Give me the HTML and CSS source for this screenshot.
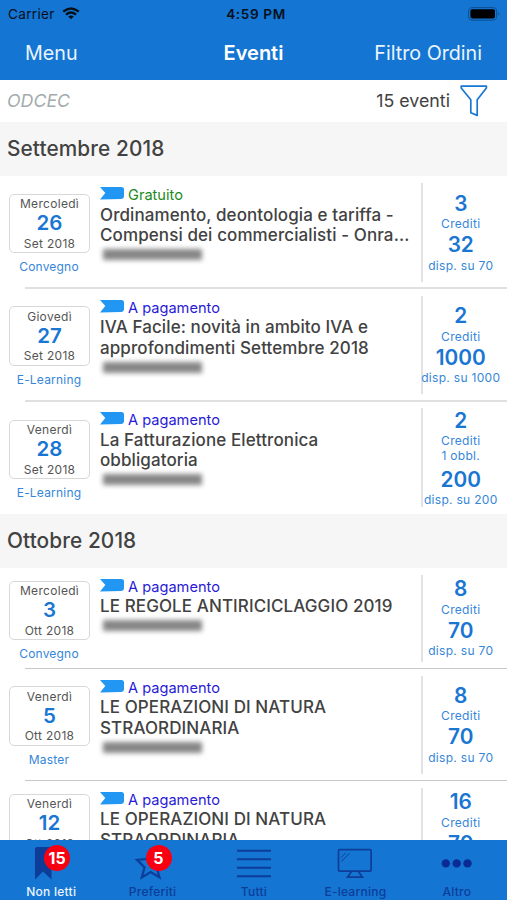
FILE: index.html
```html
<!DOCTYPE html>
<html lang="it">
<head>
    <meta charset="UTF-8">
    <meta name="viewport" content="width=device-width, initial-scale=1.0">
    <title>Eventi</title>
    <link rel="stylesheet" href="styles.css">
</head>
<body>
    <svg class="defs" width="0" height="0">
        <symbol id="flag" viewBox="0 0 24 13">
            <path d="M0 0H21.5Q24 0 24 2.5V9Q24 11.7 21 11.9L0 12.4L5.3 6Z" fill="#2196f3"/>
        </symbol>
    </svg>

    <div class="app">
        <header>
            <div class="status-bar">
                <div class="carrier">
                    <span>Carrier</span>
                    <svg width="18" height="13" viewBox="0 0 18 13" fill="none" stroke="#06101c" stroke-width="2.4">
                        <path d="M1.2 4.7Q9 -1.9 16.8 4.7"/>
                        <path d="M4 7.7Q9 3.5 14 7.7"/>
                        <path d="M9 12.3L6.2 9.6Q9 7.5 11.8 9.6Z" fill="#06101c" stroke="none"/>
                    </svg>
                </div>
                <div class="clock">4:59 PM</div>
                <svg class="battery" width="33" height="14" viewBox="0 0 33 14">
                    <rect x="0.6" y="0.6" width="28" height="12.6" rx="3.4" fill="none" stroke="#0c4f90" stroke-width="1"/>
                    <rect x="2.4" y="2.2" width="24.6" height="9.2" rx="1.8" fill="#000"/>
                    <path d="M30.3 4.8Q32.2 6.9 30.3 9Z" fill="#0c4f90"/>
                </svg>
            </div>
            <nav class="nav-bar">
                <a class="nav-left">Menu</a>
                <h1>Eventi</h1>
                <a class="nav-right">Filtro Ordini</a>
            </nav>
        </header>

        <div class="filter-bar">
            <span class="search">ODCEC</span>
            <span class="count">15 eventi</span>
            <svg width="28" height="32" viewBox="0 0 28 32" fill="none" stroke="#1976d2" stroke-width="1.7" stroke-linejoin="round">
                <path d="M1.2 1.2H26.4V3L17.2 14.8V30.4L10.8 27.8V14.8L1.2 3Z"/>
            </svg>
        </div>

        <main>
            <h2>Settembre 2018</h2>

            <div class="event">
                <div class="when">
                    <div class="date">
                        <span>Mercoledì</span>
                        <b>26</b>
                        <span>Set 2018</span>
                    </div>
                    <div class="type">Convegno</div>
                </div>
                <div class="info">
                    <div class="price free"><svg><use href="#flag"/></svg>Gratuito</div>
                    <div class="title">Ordinamento, deontologia e tariffa -<br>Compensi dei commercialisti - Onra...</div>
                    <div class="hidden-org"></div>
                </div>
                <div class="credits">
                    <b>3</b>
                    <span>Crediti</span>
                    <b class="seats">32</b>
                    <span>disp. su 70</span>
                </div>
            </div>

            <div class="event">
                <div class="when">
                    <div class="date">
                        <span>Giovedì</span>
                        <b>27</b>
                        <span>Set 2018</span>
                    </div>
                    <div class="type">E-Learning</div>
                </div>
                <div class="info">
                    <div class="price"><svg><use href="#flag"/></svg>A pagamento</div>
                    <div class="title">IVA Facile: novità in ambito IVA e<br>approfondimenti Settembre 2018</div>
                    <div class="hidden-org"></div>
                </div>
                <div class="credits">
                    <b>2</b>
                    <span>Crediti</span>
                    <b class="seats">1000</b>
                    <span>disp. su 1000</span>
                </div>
            </div>

            <div class="event last">
                <div class="when">
                    <div class="date">
                        <span>Venerdì</span>
                        <b>28</b>
                        <span>Set 2018</span>
                    </div>
                    <div class="type">E-Learning</div>
                </div>
                <div class="info">
                    <div class="price"><svg><use href="#flag"/></svg>A pagamento</div>
                    <div class="title">La Fatturazione Elettronica<br>obbligatoria</div>
                    <div class="hidden-org"></div>
                </div>
                <div class="credits">
                    <b>2</b>
                    <span>Crediti</span>
                    <span class="required">1 obbl.</span>
                    <b class="seats">200</b>
                    <span>disp. su 200</span>
                </div>
            </div>

            <h2>Ottobre 2018</h2>

            <div class="event short thin">
                <div class="when">
                    <div class="date">
                        <span>Mercoledì</span>
                        <b>3</b>
                        <span>Ott 2018</span>
                    </div>
                    <div class="type">Convegno</div>
                </div>
                <div class="info">
                    <div class="price"><svg><use href="#flag"/></svg>A pagamento</div>
                    <div class="title">LE REGOLE ANTIRICICLAGGIO 2019</div>
                    <div class="hidden-org"></div>
                </div>
                <div class="credits">
                    <b>8</b>
                    <span>Crediti</span>
                    <b class="seats">70</b>
                    <span>disp. su 70</span>
                </div>
            </div>

            <div class="event thin">
                <div class="when">
                    <div class="date">
                        <span>Venerdì</span>
                        <b>5</b>
                        <span>Ott 2018</span>
                    </div>
                    <div class="type">Master</div>
                </div>
                <div class="info">
                    <div class="price"><svg><use href="#flag"/></svg>A pagamento</div>
                    <div class="title">LE OPERAZIONI DI NATURA<br>STRAORDINARIA</div>
                    <div class="hidden-org"></div>
                </div>
                <div class="credits">
                    <b>8</b>
                    <span>Crediti</span>
                    <b class="seats">70</b>
                    <span>disp. su 70</span>
                </div>
            </div>

            <div class="event short thin">
                <div class="when">
                    <div class="date">
                        <span>Venerdì</span>
                        <b>12</b>
                        <span>Ott 2018</span>
                    </div>
                </div>
                <div class="info">
                    <div class="price"><svg><use href="#flag"/></svg>A pagamento</div>
                    <div class="title">LE OPERAZIONI DI NATURA<br>STRAORDINARIA</div>
                </div>
                <div class="credits">
                    <b>16</b>
                    <span>Crediti</span>
                    <b class="seats">70</b>
                </div>
            </div>
        </main>

        <footer class="tab-bar">
            <a class="tab active">
                <svg width="40" height="36" viewBox="0 0 40 36">
                    <path d="M4 3.5Q4 2 6 2H20.5V34.5L12 26.5L4 34.5Z" fill="#0d3c99"/>
                </svg>
                <span class="badge">15</span>
                <span>Non letti</span>
            </a>
            <a class="tab">
                <svg width="40" height="36" viewBox="0 0 40 36" fill="none" stroke="#0d3c99" stroke-width="2.2">
                    <path d="M17 6L20.2 14.6L30 15L23.4 21.6L26.5 32.4L17.7 27L8.8 32.4L11.6 22.4L4 14.8L13.4 14Z"/>
                </svg>
                <span class="badge">5</span>
                <span>Preferiti</span>
            </a>
            <a class="tab">
                <svg width="40" height="36" viewBox="0 0 40 36" stroke="#0d3c99" stroke-width="1.9">
                    <path d="M3 5.8H37M3 14.2H37M3 22.8H37M3 31.2H37"/>
                </svg>
                <span>Tutti</span>
            </a>
            <a class="tab">
                <svg width="40" height="36" viewBox="0 0 40 36" fill="none" stroke="#0d3c99" stroke-width="1.7">
                    <rect x="3.5" y="4.7" width="32.6" height="21.4" rx="1"/>
                    <path d="M16.4 26.5L12.5 32.2H27.5L23.4 26.5"/>
                    <path d="M6 12.6L10.5 8M6.4 16.4L14.6 8.2" stroke-width="1"/>
                </svg>
                <span>E-learning</span>
            </a>
            <a class="tab">
                <svg width="40" height="36" viewBox="0 0 40 36" fill="#0a2a94">
                    <circle cx="8.8" cy="18.4" r="4.2"/>
                    <circle cx="19.7" cy="18.4" r="4.2"/>
                    <circle cx="30.5" cy="18.4" r="4.2"/>
                </svg>
                <span>Altro</span>
            </a>
        </footer>
    </div>
</body>
</html>
```
FILE: styles.css
```css
* {
    margin: 0;
    padding: 0;
    box-sizing: border-box;
}

body {
    font-family: Inter, "Liberation Sans", sans-serif;
    background: #fff;
    color: #424242;
    overflow: hidden;
}

.defs {
    display: block;
}

.app {
    height: 100vh;
    display: flex;
    flex-direction: column;
}

header {
    height: 79.5px;
    flex-shrink: 0;
    background: #1476d2;
}

.status-bar {
    height: 27px;
    padding: 0 6px 0 8px;
    display: grid;
    grid-template-columns: 1fr auto 1fr;
    align-items: center;
    color: #06101c;
    font-size: 13.6px;
}

.carrier {
    display: flex;
    align-items: center;
    gap: 7px;
    letter-spacing: 0.3px;
}

.clock {
    padding-left: 3px;
    font-weight: 600;
    letter-spacing: 0.6px;
}

.battery {
    justify-self: end;
}

.nav-bar {
    height: 51px;
    padding: 0 25px;
    display: grid;
    grid-template-columns: 1fr auto 1fr;
    align-items: center;
    color: #eaf4fd;
    font-size: 19.7px;
}

.nav-bar h1 {
    color: #fff;
    font-size: 20px;
    font-weight: 600;
}

.nav-right {
    text-align: right;
}

.filter-bar {
    height: 42.5px;
    flex-shrink: 0;
    padding: 0 19px 0 7px;
    display: flex;
    align-items: center;
    font-size: 17.8px;
}

.search {
    flex: 1;
    color: #a3abad;
    font-style: italic;
}

.count {
    margin-right: 10px;
}

main {
    flex: 1;
    min-height: 0;
    overflow: hidden;
}

h2 {
    height: 54.4px;
    padding-left: 7px;
    background: #f6f6f6;
    font-size: 20.8px;
    font-weight: 500;
    line-height: 54px;
    letter-spacing: 0.1px;
}

.event {
    height: 112.4px;
    position: relative;
    display: grid;
    grid-template-columns: 100px 1fr 86px;
}

.event.short {
    height: 100.6px;
}

/* row separator, inset on the left */
.event::after {
    content: "";
    position: absolute;
    left: 25px;
    right: 0;
    bottom: -0.5px;
    height: 2px;
    background: #e0e0e0;
}

.event.thin::after {
    bottom: -0.5px;
    height: 1px;
    background: #c8c8c8;
}

.event.last::after {
    display: none;
}

.when {
    padding: 17.5px 0 0 9px;
}

.event.short .when {
    padding-top: 13px;
}

.event.last .when {
    padding-top: 18.5px;
}

.date {
    width: 81px;
    height: 59.5px;
    border: 1.5px solid #d8d8d8;
    border-radius: 5px;
    display: flex;
    flex-direction: column;
    align-items: center;
    padding-top: 1.5px;
    font-size: 12px;
    line-height: 15px;
    letter-spacing: 0.3px;
    color: #555;
}

.date b {
    color: #1976d2;
    font-size: 20.5px;
    font-weight: 600;
    line-height: 24.5px;
    letter-spacing: 0;
}

.type {
    width: 80px;
    margin-top: 6px;
    text-align: center;
    color: #3586d9;
    font-size: 12px;
    line-height: 15px;
    letter-spacing: 0.2px;
}

.info {
    padding-top: 11px;
    white-space: nowrap;
}

.price {
    display: flex;
    height: 17.5px;
    gap: 4px;
    color: #2a1bd6;
    font-size: 14.6px;
    line-height: 17px;
}

.price svg {
    width: 24px;
    height: 13px;
}

.price.free {
    color: #1d8a1d;
}

.title {
    font-size: 17px;
    font-weight: 500;
    line-height: 20.5px;
    letter-spacing: 0.1px;
}

.hidden-org {
    width: 99px;
    height: 11px;
    margin: 3.5px 0 0 3px;
    background: #868686;
    filter: blur(2.5px);
}

.credits {
    margin: 7px 0;
    border-left: 2px solid #e2e2e2;
    display: flex;
    flex-direction: column;
    align-items: center;
    padding: 8.3px 8.5px 0 0;
    color: #3586d9;
    font-size: 12px;
    letter-spacing: 0.3px;
    white-space: nowrap;
}

.event.short .credits {
    padding-top: 2.3px;
}

.event.last .credits {
    padding-top: 0.5px;
}

.credits span {
    line-height: 15px;
}

.credits b {
    color: #1976d2;
    font-size: 20.8px;
    font-weight: 600;
    line-height: 24.5px;
    letter-spacing: 0;
}

.credits .seats {
    margin-top: 2px;
}

.credits .required {
    margin-bottom: 2.5px;
}

.tab-bar {
    height: 60px;
    flex-shrink: 0;
    display: grid;
    grid-template-columns: repeat(5, 1fr);
    background: #1476d2;
}

.tab {
    position: relative;
    display: flex;
    flex-direction: column;
    align-items: center;
    padding: 5px 0 0 1px;
    color: #0d3c99;
    font-size: 12px;
    font-weight: 500;
    line-height: 15px;
    letter-spacing: 0.25px;
}

.tab svg {
    margin-bottom: 3px;
}

.tab.active {
    color: #eaf4fd;
}

.badge {
    position: absolute;
    top: 5px;
    left: 50%;
    margin-left: -6.5px;
    width: 26px;
    height: 26px;
    border-radius: 50%;
    background: #f80012;
    color: #fff;
    font-size: 16px;
    font-weight: 700;
    line-height: 26px;
    text-align: center;
}
```
